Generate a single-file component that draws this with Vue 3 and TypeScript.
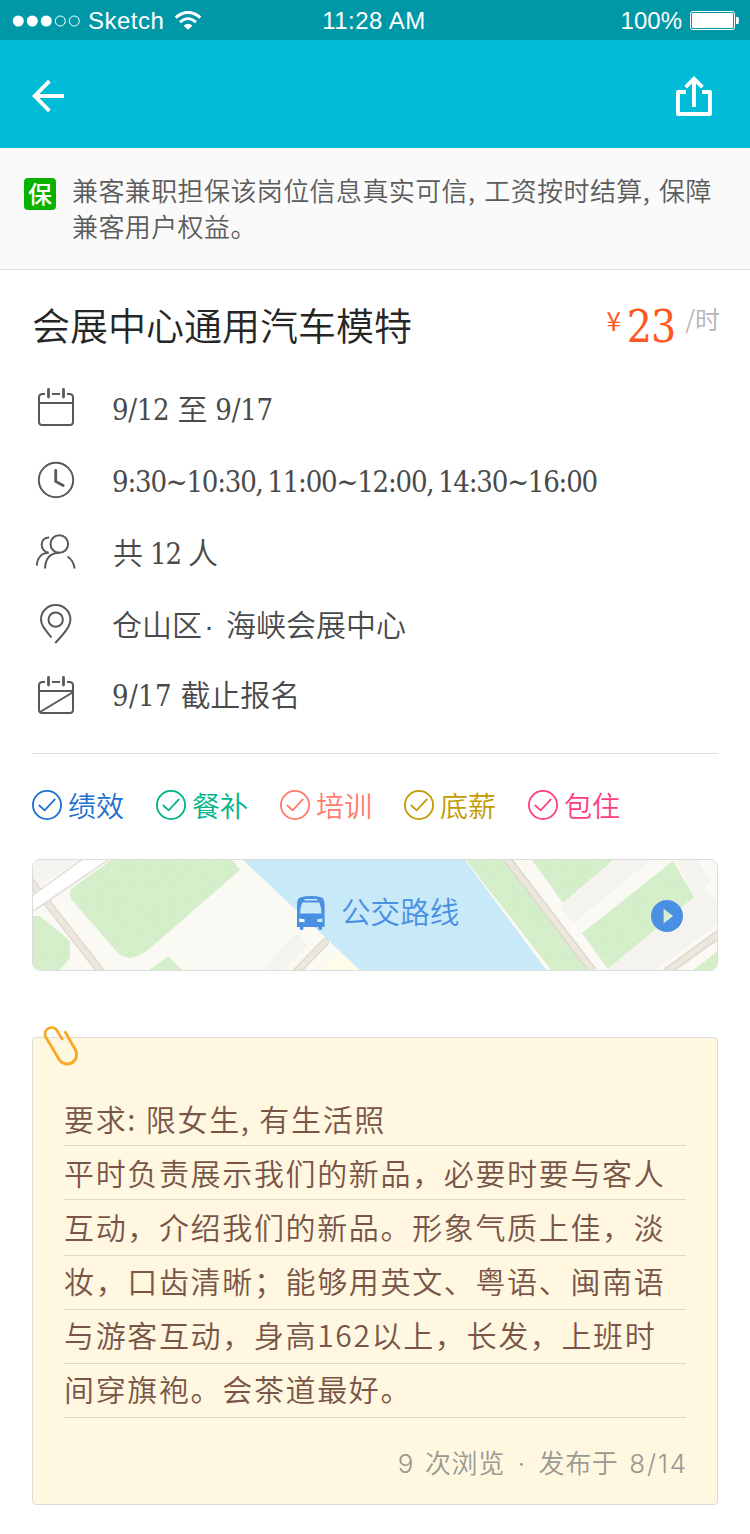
<script setup lang="ts">
interface Perk {
  label: string
  tone: string
}

interface NoteLine {
  text: string
  kind: string
}

const perks: Perk[] = [
  { label: '绩效', tone: 'blue' },
  { label: '餐补', tone: 'green' },
  { label: '培训', tone: 'coral' },
  { label: '底薪', tone: 'gold' },
  { label: '包住', tone: 'pink' },
]

const noteLines: NoteLine[] = [
  { text: '要求: 限女生, 有生活照', kind: '' },
  { text: '平时负责展示我们的新品，必要时要与客人', kind: '' },
  { text: '互动，介绍我们的新品。形象气质上佳，淡', kind: 'tall' },
  { text: '妆，口齿清晰；能够用英文、粤语、闽南语', kind: 'raised' },
  { text: '与游客互动，身高162以上，长发，上班时', kind: 'raised' },
  { text: '间穿旗袍。会茶道最好。', kind: 'raised' },
]
</script>

<template>
  <div class="page">
    <header class="status">
      <div class="carrier">
        <svg class="signal" width="70" height="14" viewBox="0 0 70 14">
          <circle cx="6.3" cy="7" r="5.5" fill="#fff" />
          <circle cx="20.3" cy="7" r="5.5" fill="#fff" />
          <circle cx="34.3" cy="7" r="5.5" fill="#fff" />
          <circle cx="48.3" cy="7" r="5" fill="none" stroke="#fff" />
          <circle cx="62.3" cy="7" r="5" fill="none" stroke="#fff" />
        </svg>
        <span class="carrier-name">Sketch</span>
        <svg class="wifi" width="28" height="20" viewBox="0 0 28 20" fill="none" stroke="#fff">
          <path d="M1.7 6.6Q14 -3.8 26.3 6.6" stroke-width="3" />
          <path d="M6 11.2Q14 4 22 11.2" stroke-width="2.8" />
          <path d="M9.5 14.8Q14 10.6 18.5 14.8L14 18.8Z" fill="#fff" stroke="none" />
        </svg>
      </div>
      <span class="clock">11:28 AM</span>
      <div class="power">
        <span class="percent">100%</span>
        <svg width="50" height="20" viewBox="0 0 50 20">
          <rect x="0.5" y="0.5" width="44" height="18" rx="2.5" fill="none" stroke="#fff" />
          <rect x="2" y="2" width="41" height="15" rx="1.2" fill="#fff" />
          <path d="M46 6h1.5q1.3 0 1.3 1.3v4.4q0 1.3-1.3 1.3H46z" fill="#fff" />
        </svg>
      </div>
    </header>

    <nav class="nav">
      <svg width="36" height="36" viewBox="0 0 36 36" fill="none" stroke="#fff" stroke-width="3.8">
        <path d="M19.400 3.200 4.700 18 19.400 32.800M5 18h29" />
      </svg>
      <svg width="36" height="40" viewBox="0 0 36 40" fill="none" stroke="#fff" stroke-width="4">
        <path d="M10 16H2v22h32V16h-8" stroke-linejoin="round" />
        <path d="M18 31V4" />
        <path d="M9.6 11.2 18 2.8l8.4 8.4" stroke-width="3.8" />
      </svg>
    </nav>

    <section class="notice">
      <span class="badge">保</span>
      <p class="notice-text">兼客兼职担保该岗位信息真实可信, 工资按时结算, 保障<br />兼客用户权益。</p>
    </section>

    <main class="body">
      <div class="heading">
        <h1 class="title">会展中心通用汽车模特</h1>
        <div class="price">
          <span class="yen">¥</span>
          <span class="amount">23</span>
          <span class="unit">/时</span>
        </div>
      </div>

      <ul class="facts">
        <li class="fact">
          <svg class="fact-icon" width="40" height="40" viewBox="0 0 40 40">
            <path d="M9 6H6.500Q3 6 3 9.500V34Q3 37 6 37H34Q37 37 37 34V9.500Q37 6 33.500 6H31M16 6H24M3 15H37" />
            <path d="M12.500 1.500V9M27.500 1.500V9" class="peg" />
          </svg>
          <span class="fact-text dates">9/12 <i>至</i> 9/17</span>
        </li>
        <li class="fact">
          <svg class="fact-icon" width="40" height="40" viewBox="0 0 40 40">
            <circle cx="20" cy="20" r="17.200" />
            <path d="M19.700 10.500V21.500L27.200 25.600" class="hand" />
          </svg>
          <span class="fact-text hours">9:30~10:30, 11:00~12:00, 14:30~16:00</span>
        </li>
        <li class="fact">
          <svg class="fact-icon" width="40" height="40" viewBox="0 0 40 40">
            <circle cx="23.300" cy="12" r="8.800" />
            <path d="M9 36.500C9.400 27 14 21 23.300 20.800M31.500 24.500Q38 29 38.500 36.500" />
            <path d="M13.200 5.400C3.500 5.400 3 19 12.800 20.800M.8 33.600C1 26 5.500 20.800 12.800 20.800" />
          </svg>
          <span class="fact-text people"><i>共</i> 12 <i>人</i></span>
        </li>
        <li class="fact">
          <svg class="fact-icon" width="40" height="40" viewBox="0 0 40 40">
            <circle cx="19.700" cy="15.600" r="7.200" />
            <path d="M15.500 33.500C9.500 26 5 21.500 5 15.200A14.700 14.200 0 0 1 34.400 15.200C34.400 22.500 28.500 29 19.200 39" />
          </svg>
          <span class="fact-text place"><i>仓山区</i><b>·</b><i>海峡会展中心</i></span>
        </li>
        <li class="fact">
          <svg class="fact-icon" width="40" height="40" viewBox="0 0 40 40">
            <path d="M9 6H6.500Q3 6 3 9.500V34Q3 37 6 37H34Q37 37 37 34V9.500Q37 6 33.500 6H31M16 6H24M3 15H37M4 36 36.500 16.500" />
            <path d="M12.500 1.500V9M27.500 1.500V9" class="peg" />
          </svg>
          <span class="fact-text deadline">9/17 <i>截止报名</i></span>
        </li>
      </ul>

      <ul class="perks">
        <li v-for="perk in perks" :key="perk.label" class="perk" :class="perk.tone">
          <svg width="30" height="30" viewBox="0 0 30 30" fill="none" stroke="currentColor" stroke-width="1.8">
            <circle cx="15" cy="15" r="14.100" />
            <path d="M7.300 15.500 12.700 20.300 22.800 9.400" stroke-linecap="round" />
          </svg>
          <span class="perk-label">{{ perk.label }}</span>
        </li>
      </ul>

      <div class="route">
        <svg class="map" width="684" height="110" viewBox="1 1 684 110">
          <defs>
            <pattern id="grass" width="13" height="11" patternUnits="userSpaceOnUse">
              <rect width="13" height="11" fill="#d5eeca" />
              <path d="M1 2h2M7 1h1M10 4h2M4 6h1M8 8h2M1 9h1M5 10h1" stroke="#def2d5" />
            </pattern>
          </defs>
          <rect width="686" height="112" fill="#faf9f4" />
          <path d="M0 0H48L8 26 0 20Z" fill="#f4f3ef" />
          <path d="M-4 19 70 114" fill="none" stroke="#ddd7cc" stroke-width="8" />
          <path d="M-4 19 70 114" fill="none" stroke="#ebe7dc" stroke-width="5.500" />
          <path d="M-3 39 52-1H79L-3 55Z" fill="#fff" stroke="#e2ddd7" stroke-width="1.500" />
          <g fill="url(#grass)">
            <path d="M81 0H200L208 11 116 91Q106 98 98 99 90 99 84 92L40 41Q36 35 40 29Z" />
            <path d="M0 57H8L38 82V99L27 112H0Z" />
            <path d="M116 112 136 97 151 112Z" />
          </g>
          <path d="M233 112V107L263 76H268L275 86 250 112Z" fill="#f4f3ef" />
          <path d="M287 112 306 93 329 112Z" fill="#fffce9" />
          <path d="M210 0H432L515 112H329Z" fill="#c8e9f8" />
          <path d="M264 113 293 83.500" fill="none" stroke="#ddd7cc" stroke-width="8" stroke-linecap="round" />
          <path d="M264 113 293 83.500" fill="none" stroke="#ebe7dc" stroke-width="5.500" stroke-linecap="round" />
          <path d="M643 0H665L678 23 673 28 686 46V65L622 112H574L662 38ZM580 0H620L541 65 529 48Z" fill="#f4f3ef" />
          <g fill="url(#grass)">
            <path d="M433 0H471L556 112H520Z" />
            <path d="M499 0H582L531 44Z" />
            <path d="M641 2 662 38 576 110 550 74Z" />
            <path d="M686 92 660 112H686Z" />
          </g>
          <path d="M475 0 561 112M687 75 634 113" fill="none" stroke="#ddd7cc" stroke-width="8.500" />
          <path d="M475 0 561 112M687 75 634 113" fill="none" stroke="#ebe7dc" stroke-width="5.500" />
        </svg>
        <svg class="bus" width="28" height="34" viewBox="0 0 28 34">
          <path
            fill="#4a90e2"
            fill-rule="evenodd"
            d="M0 31V9Q0 2 4 1.300 14-1.300 24 1.300 27.600 2 27.600 9V31H25V33Q25 34 23.200 34T21.400 33V31H6.400V33Q6.400 34 4.600 34T2.800 33V31ZM7.500 3V4.500H20.300V3ZM5.300 6.500Q3 12 3 17.500H24.600Q24.600 12 22.300 6.500ZM2.200 22.500V26H7.500V23.300ZM25.500 22.500 20.300 23.300V26H25.500Z"
          />
        </svg>
        <span class="route-label">公交路线</span>
        <svg class="play" width="32" height="32" viewBox="0 0 32 32">
          <path
            fill="#4a90e2"
            fill-rule="evenodd"
            d="M16 0A16 16 0 1 1 16 32 16 16 0 1 1 16 0ZM12.600 8.700V23.300L22 16Z"
          />
        </svg>
      </div>

      <article class="note">
        <svg class="clip" width="40" height="44" viewBox="0 0 40 44">
          <path d="M24.800 6.300 35.400 24.700A9.500 9.500 0 0 1 19 34.300L5.300 11.200A6.600 6.600 0 0 1 16.700 5L22.700 15" />
        </svg>
        <p v-for="line in noteLines" :key="line.text" class="line" :class="line.kind">{{ line.text }}</p>
        <footer class="meta">9 次浏览 <b>·</b> 发布于 <i>8/14</i></footer>
      </article>
    </main>
  </div>
</template>

<style>
body {
  margin: 0;
  background: #fff;
}
</style>

<style scoped>
.page {
  width: 750px;
  height: 1534px;
  overflow: hidden;
  background: #fff;
  font-family: 'Noto Sans CJK SC', sans-serif;
  font-weight: 350;
}

p,
h1,
ul {
  margin: 0;
  padding: 0;
  list-style: none;
}

i,
b {
  font-style: normal;
  font-weight: inherit;
}

.status {
  display: grid;
  grid-template-columns: 1fr auto 1fr;
  box-sizing: border-box;
  height: 40px;
  padding: 0 10px 0 12px;
  background: #0097a7;
  color: #fff;
  font: 24px/41px 'Liberation Sans', sans-serif;
}

.carrier,
.power {
  display: flex;
  align-items: center;
}

.carrier-name {
  margin-left: 6px;
  letter-spacing: 0.5px;
}

.wifi {
  margin-left: 10px;
}

.clock {
  margin-right: 4px;
  letter-spacing: 0.5px;
}

.power {
  justify-content: flex-end;
  gap: 8px;
}

.nav {
  display: flex;
  align-items: center;
  justify-content: space-between;
  box-sizing: border-box;
  height: 108px;
  padding: 4px 38px 0 30px;
  background: #00bcd7;
}

.notice {
  display: flex;
  box-sizing: border-box;
  height: 122px;
  padding: 24px 24px 0;
  border-bottom: 1px solid #e0e0e0;
  background: #fafafa;
}

.badge {
  width: 32px;
  height: 32px;
  margin: 6px 16px 0 0;
  border-radius: 4px;
  background: #09b200;
  color: #fff;
  font-size: 24px;
  font-weight: 500;
  line-height: 30px;
  text-align: center;
}

.notice-text {
  color: #5c5c5c;
  font-size: 26px;
  letter-spacing: 0.4px;
  line-height: 36px;
  white-space: nowrap;
  word-spacing: 2.7px;
}

.body {
  padding: 0 32px;
}

.heading {
  display: flex;
  justify-content: space-between;
  height: 102px;
}

.title {
  color: #262626;
  font-size: 38px;
  font-weight: inherit;
  line-height: 108px;
}

.price {
  display: flex;
  margin-right: -2px;
  color: #ff5722;
}

.yen {
  font-size: 26px;
  font-weight: 400;
  line-height: 99px;
}

.amount {
  margin-left: 6px;
  font: 44px/114px 'Roboto Slab', 'DejaVu Serif Condensed', 'DejaVu Serif', serif;
  font-stretch: condensed;
  letter-spacing: -1px;
}

.unit {
  margin-left: 10px;
  color: #b4b4b8;
  font-size: 25px;
  line-height: 96px;
}

.facts {
  height: 381px;
}

.fact {
  display: flex;
  align-items: center;
  height: 72px;
}

.fact-icon {
  flex: none;
  margin: 0 36px 0 4px;
  fill: none;
  stroke: #595959;
  stroke-width: 2;
}

.peg,
.hand {
  stroke-width: 2.8;
  stroke-linecap: round;
}

.fact-text {
  color: #4a4a4a;
  font: 350 29px/40px 'Roboto Slab', 'DejaVu Serif Condensed', 'DejaVu Serif', 'Noto Sans CJK SC', serif;
  font-stretch: condensed;
  white-space: nowrap;
}

.fact-text i {
  font-family: 'Noto Sans CJK SC', sans-serif;
  font-size: 30px;
  letter-spacing: 0;
}

.dates {
  letter-spacing: -0.3px;
}

.hours {
  padding-top: 4px;
  letter-spacing: -1.2px;
  word-spacing: -2.5px;
}

.people {
  padding-left: 1px;
  letter-spacing: -1.2px;
}

.place b {
  margin: 0 12px 0 2px;
  font-family: 'Liberation Sans', sans-serif;
  font-size: 30px;
}

.deadline {
  margin-top: -4px;
  letter-spacing: 0.3px;
}

.perks {
  display: flex;
  box-sizing: border-box;
  height: 106px;
  padding-top: 31px;
  border-top: 1px solid #e0e0e0;
}

.perk {
  display: flex;
  align-items: center;
  width: 124px;
  height: 40px;
  gap: 6px;
  font-size: 28px;
  line-height: 40px;
}

.perk-label {
  margin-top: -1px;
}

.blue {
  color: #1f6fce;
}

.green {
  color: #00b388;
}

.coral {
  color: #ff7a6b;
}

.gold {
  color: #c49a00;
}

.pink {
  color: #ff3d82;
}

.route {
  position: relative;
  display: flex;
  align-items: center;
  box-sizing: border-box;
  height: 112px;
  padding: 0 34px 4px 264px;
  overflow: hidden;
  border: 1px solid #dcdcdc;
  border-radius: 8px;
}

.map {
  position: absolute;
  inset: 0;
}

.bus,
.play,
.route-label {
  position: relative;
}

.route-label {
  margin: -4px 0 0 16px;
  color: #4a90e2;
  font-size: 29.600px;
  line-height: 40px;
}

.play {
  margin: 5px 0 0 auto;
}

.note {
  position: relative;
  box-sizing: border-box;
  height: 468px;
  margin-top: 66px;
  padding: 54px 31px 0;
  border: 1px solid #dcdcd6;
  border-radius: 4px;
  background: #fff7e0;
}

.clip {
  position: absolute;
  top: -13px;
  left: 7px;
  fill: none;
  stroke: #f9a825;
  stroke-width: 2.800;
}

.line {
  box-sizing: border-box;
  height: 54px;
  border-bottom: 1px solid #e0d8c3;
  color: #795548;
  font-size: 30px;
  letter-spacing: 1.650px;
  line-height: 52px;
  white-space: nowrap;
  word-spacing: 0.5px;
}

.tall {
  height: 56px;
}

.raised {
  line-height: 48px;
}

.meta {
  margin: 27px -2px 0 0;
  color: #999891;
  font: 350 26px/38px Inter, 'Noto Sans CJK SC', sans-serif;
  letter-spacing: 0.600px;
  text-align: right;
  word-spacing: 3px;
}

.meta b {
  margin: 0 2px;
}

.meta i {
  letter-spacing: 1.8px;
}
</style>
